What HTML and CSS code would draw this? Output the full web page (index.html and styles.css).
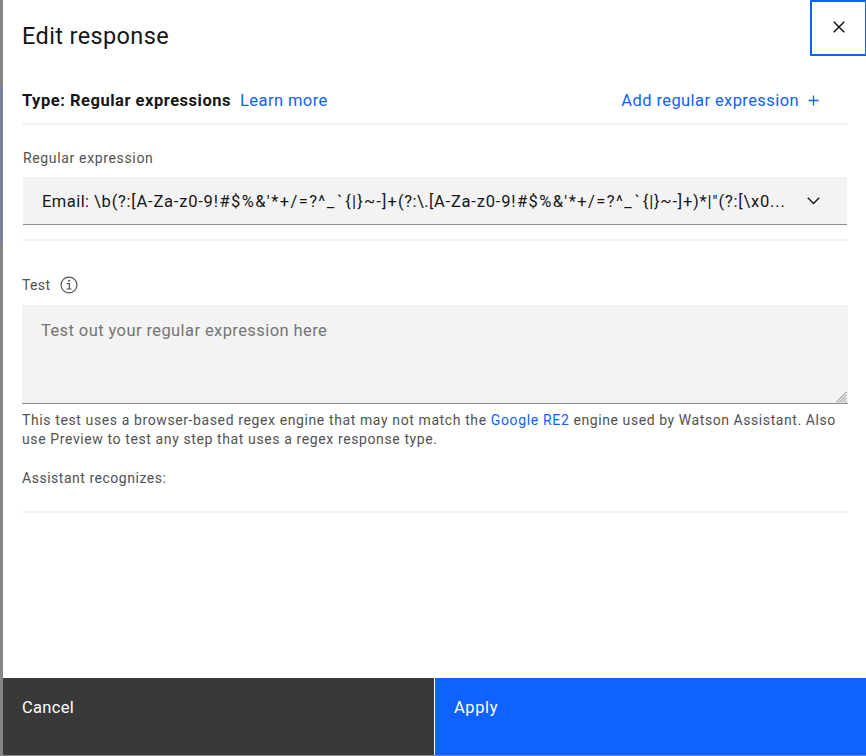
FILE: index.html
```
<!DOCTYPE html>
<html lang="en">
<head>
<meta charset="utf-8">
<title>Edit response</title>
<link rel="stylesheet" href="styles.css">
</head>
<body>
<main class="panel">
  <header class="header">
    <h1 class="title">Edit response</h1>
    <button class="close" aria-label="Close"><svg width="12" height="12" viewBox="0 0 12 12"><path d="M.7.7l10.6 10.6M11.3.7.7 11.3"/></svg></button>
  </header>
  <section class="content">
    <div class="type-row">
      <strong class="type">Type: Regular expressions</strong>
      <a class="learn">Learn more</a>
      <a class="add"><span>Add regular expression</span><svg width="11" height="11" viewBox="0 0 11 11"><path d="M5.5 .5v10M.5 5.5h10"/></svg></a>
    </div>
    <div class="field">
      <div class="label">Regular expression</div>
      <div class="select"><span class="value"><span class="name">Email: </span><span class="open">\b(?:[</span><span class="range">A-Za-z0-9</span><span class="symbols">!#$%&amp;'*+/=?^</span><span class="low">_`</span><span class="tail">{|}~-]+</span><span class="group">(?:\.[</span><span class="range">A-Za-z0-9</span><span class="symbols">!#$%&amp;'*+/=?^</span><span class="low">_`</span><span class="rest">{|}~-]+)*</span><span class="rest">|"(?:[\x0...</span></span>
        <svg width="13" height="8" viewBox="0 0 13 8"><path d="M.8.8l5.7 5.7L12.2.8"/></svg></div>
    </div>
    <div class="test-label"><span>Test</span><svg width="18" height="18" viewBox="0 0 18 18"><circle cx="9" cy="9" r="7.9"/><path d="M6.8 7.7H9.4V13M6.6 13h5"/><circle class="dot" cx="9" cy="4.8" r="1"/></svg></div>
    <div class="textarea"><span>Test out your regular expression here</span><svg width="11" height="11" viewBox="0 0 11 11"><path d="M0 10.5 10.5 0M3 10.5 10.5 3M6 10.5 10.5 6M9 10.5l1.5-1.5"/></svg></div>
    <p class="help">This test uses a browser-based regex engine that may not match the <a>Google RE2</a><span class="engine"> engine used by Watson Assistant. Also</span><br>use Preview to test any step that uses a regex response type.</p>
    <div class="recognizes">Assistant recognizes:</div>
  </section>
  <footer class="actions"><button class="cancel">Cancel</button><button class="apply">Apply</button></footer>
</main>
</body>
</html>
```
FILE: styles.css
```
* { box-sizing: border-box; }
body {
  margin: 0;
  height: 756px;
  padding: 0 0 1px 3px;
  overflow: hidden;
  background: linear-gradient(#868686 86px, #778196 86px, #778196 242px, #868686 242px);
  font: 16.5px/22px Roboto, sans-serif;
  letter-spacing: .41px;
  color: #161616;
}
svg { fill: none; stroke: currentColor; flex: none; }
button { font: inherit; letter-spacing: inherit; border: 0; border-radius: 0; }
a { color: #0f62fe; }
.panel { height: 755px; background: #fff; display: flex; flex-direction: column; }
.header { height: 56px; display: flex; justify-content: space-between; padding-left: 19px; }
.title { margin: 19px 0 0; font-size: 23.5px; line-height: 34px; font-weight: 400; letter-spacing: .38px; }
.close { width: 56px; height: 56px; padding: 0 0 2px; background: #fff; border: 2px solid #0f62fe; border-right-width: 1px; color: #161616; display: flex; align-items: center; justify-content: center; }
.close svg { stroke-width: 1.5; }
.content { flex: 1; padding: 0 18px 0 19px; }
.type-row { height: 69px; padding-top: 34px; display: flex; border-bottom: 2px solid #f3f3f3; white-space: nowrap; }
.type { font-weight: 700; letter-spacing: .52px; }
.learn { margin-left: 9px; }
.add { margin-left: auto; margin-right: 29px; display: flex; align-items: center; height: 22px; gap: 9px; }
.add svg { stroke-width: 1.3; position: relative; top: -1px; }
.field { height: 116px; padding: 24px 1px 0; border-bottom: 2px solid #f3f3f3; }
.label, .test-label, .help, .recognizes { font-size: 14px; line-height: 19px; letter-spacing: .61px; color: #525252; }
.label { letter-spacing: .65px; }
.select { margin-top: 9px; height: 48px; padding: 1px 27px 0 19px; display: flex; align-items: center; justify-content: space-between; background: #f3f3f3; border-bottom: 1px solid #8d8d8d; }
.select svg { stroke-width: 1.4; }
.value { white-space: pre; padding-top: 1px; }
.name { letter-spacing: .45px; }
.open { letter-spacing: .75px; }
.group { letter-spacing: .5px; }
.range { letter-spacing: .8px; }
.symbols { letter-spacing: 1.42px; }
.low { letter-spacing: 3px; }
.tail { letter-spacing: 1.15px; }
.rest { letter-spacing: .8px; }
.test-label { margin-top: 35px; display: flex; align-items: center; gap: 10px; height: 19px; letter-spacing: .35px; }
.test-label svg { stroke-width: 1.2; margin-top: -1px; }
.dot { fill: currentColor; stroke: none; }
.textarea { margin-top: 10px; height: 99px; padding: 15px 0 0 19px; background: #f3f3f3; border-bottom: 1px solid #8d8d8d; color: #757575; position: relative; }
.textarea svg { position: absolute; right: 1px; bottom: 0; stroke-width: .9; }
.help { margin: 7px 0 0; white-space: nowrap; }
.help a { letter-spacing: .66px; }
.engine { letter-spacing: .57px; }
.recognizes { margin-top: 20px; height: 44px; letter-spacing: .52px; border-bottom: 2px solid #f3f3f3; }
.actions { height: 77px; display: grid; grid-template-columns: 431px 1fr; gap: 1px; }
.actions button { text-align: left; padding: 19px; color: #fff; display: flex; align-items: flex-start; line-height: 22px; }
.actions .cancel { background: #393939; letter-spacing: .3px; }
.actions .apply { background: #0f62fe; letter-spacing: .6px; }
```
